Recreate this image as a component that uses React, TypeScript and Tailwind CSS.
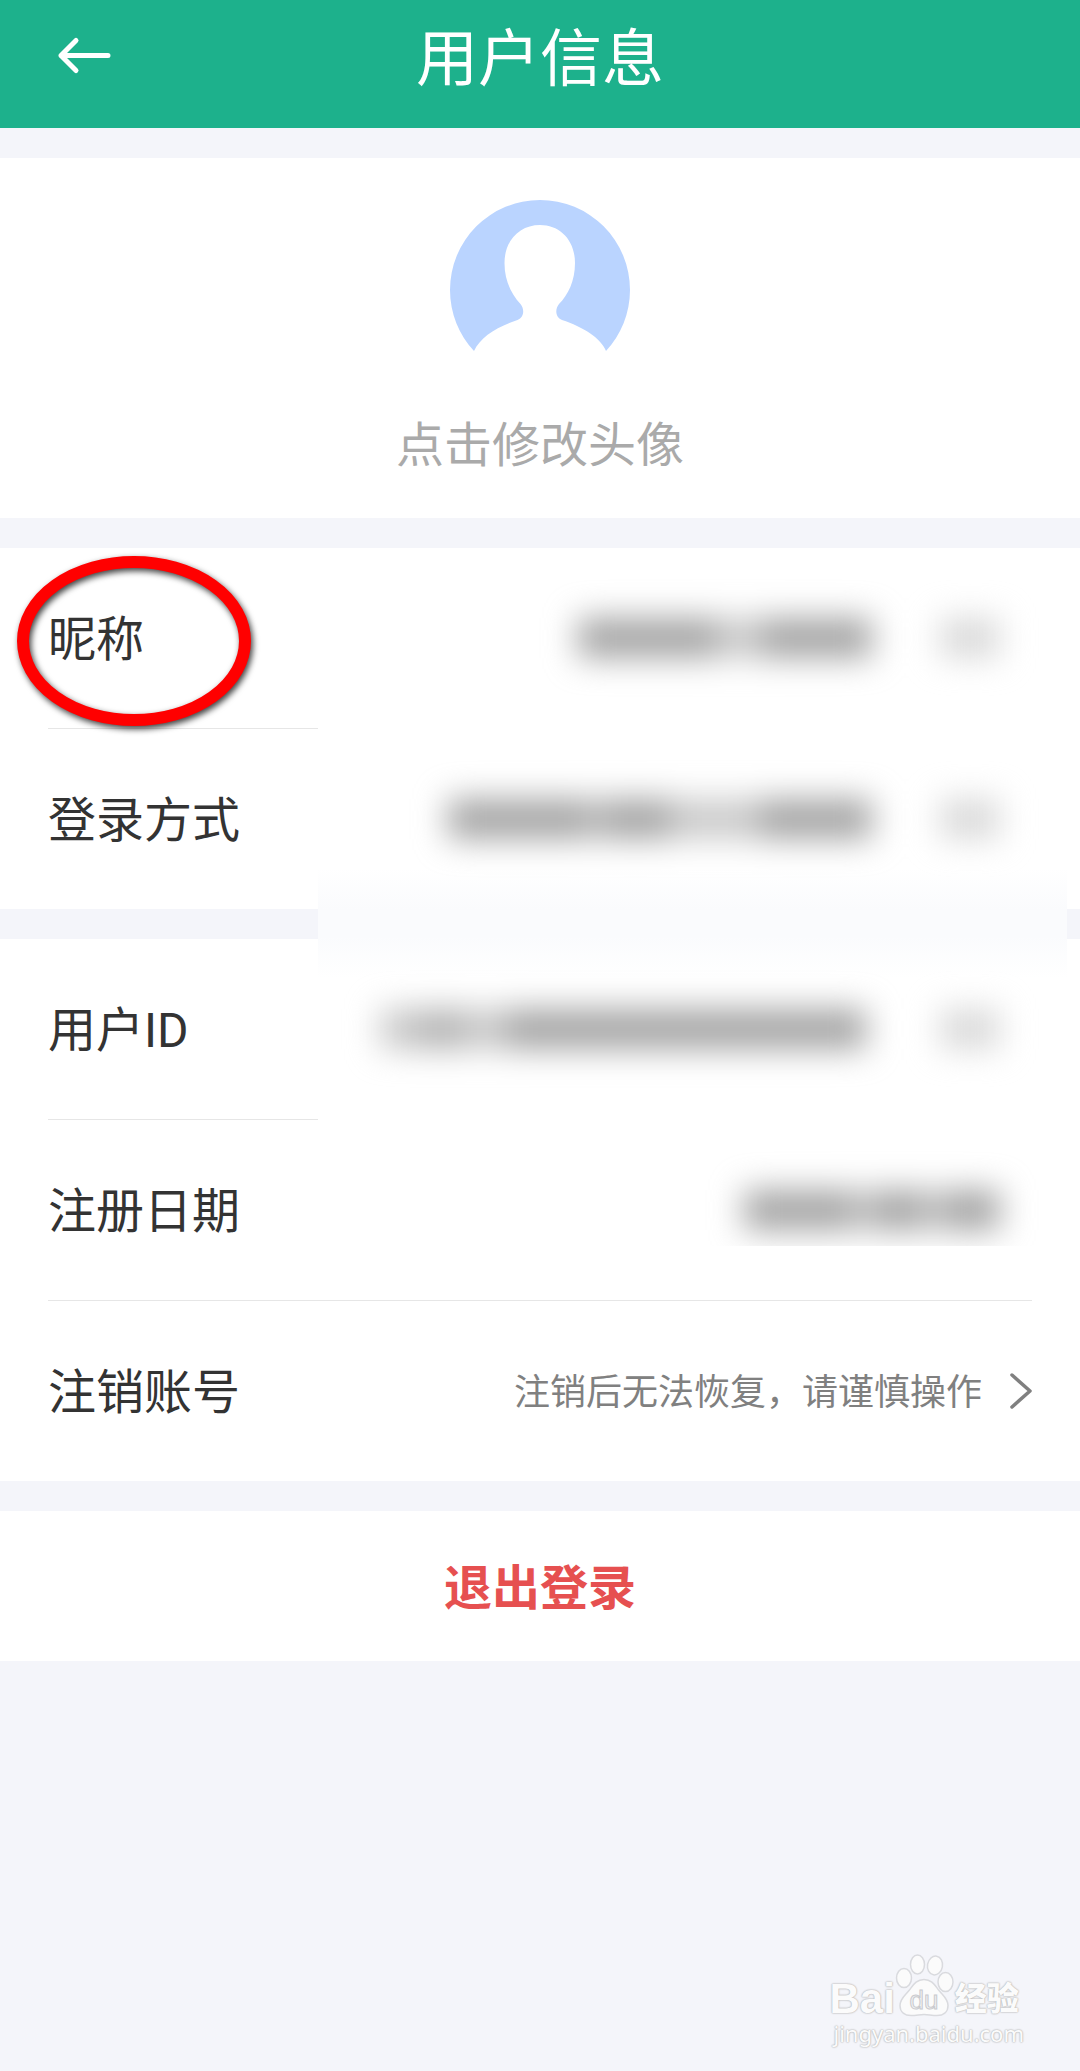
import type { ReactNode } from 'react'
import clsx from 'clsx'

interface Segment {
  width: number
  tone: 'dark' | 'mid' | 'light' | 'faint' | 'none'
}

const TONES: Record<Segment['tone'], string> = {
  dark: 'bg-[#a4a4a4]',
  mid: 'bg-[#b4b4b4]',
  light: 'bg-[#cacaca]',
  faint: 'bg-[#dadada]',
  none: 'bg-transparent',
}

// Space between the value and the arrow, then the arrow itself
const ARROW: Segment[] = [
  { width: 68, tone: 'none' },
  { width: 60, tone: 'faint' },
]

const NICKNAME: Segment[] = [
  { width: 138, tone: 'dark' },
  { width: 46, tone: 'light' },
  { width: 110, tone: 'dark' },
  ...ARROW,
]

const LOGIN_METHOD: Segment[] = [
  { width: 142, tone: 'dark' },
  { width: 12, tone: 'light' },
  { width: 68, tone: 'dark' },
  { width: 90, tone: 'light' },
  { width: 112, tone: 'dark' },
  ...ARROW,
]

const USER_ID: Segment[] = [
  { width: 36, tone: 'light' },
  { width: 50, tone: 'mid' },
  { width: 40, tone: 'light' },
  { width: 360, tone: 'dark' },
  { width: 6, tone: 'none' },
  ...ARROW,
]

const REGISTER_DATE: Segment[] = [
  { width: 110, tone: 'dark' },
  { width: 18, tone: 'light' },
  { width: 52, tone: 'dark' },
  { width: 18, tone: 'light' },
  { width: 58, tone: 'dark' },
]

function HiddenValue({ segments, clipped }: { segments: Segment[]; clipped?: boolean }) {
  return (
    <div
      className={clsx(
        'relative z-10 mr-8 flex blur-[16px]',
        clipped && '[clip-path:inset(-60px_-60px_-16px)]'
      )}
      aria-hidden="true"
    >
      {segments.map((segment, i) => (
        <span
          key={i}
          className={clsx('h-10', TONES[segment.tone])}
          style={{ width: segment.width }}
        />
      ))}
    </div>
  )
}

interface RowProps {
  label: string
  last?: boolean
  children: ReactNode
}

function Row({ label, last, children }: RowProps) {
  return (
    <div
      className={clsx(
        'mx-12 flex items-center justify-between',
        !last && 'border-b border-[#e6e6e6]'
      )}
    >
      <span className="pt-14 pb-[52px] text-[48px] leading-[72px] text-[#333333]">{label}</span>
      {children}
    </div>
  )
}

function Avatar() {
  return (
    <svg className="size-[180px]" viewBox="0 0 180 180" aria-hidden="true">
      <path
        fill="#bad4ff"
        d="M24 151C9 135 0 113 0 90a90 90 0 0 1 180 0c0 23-9 45-24 61-5-13-23-24-44-31-7-3-7-11-3-16 9-9 16-23 16-41 0-23-15-38-35-38S54.500 40 54.500 63c0 18 7 31 16 41 4 5 4 13-3 16-21 7-37 17-43.500 31z"
      />
    </svg>
  )
}

function Paw() {
  return (
    <svg className="h-16 w-[60px]" viewBox="0 0 60 64" aria-hidden="true">
      <g fill="#fbfbfb" stroke="#d9dade" strokeWidth="1.500">
        <ellipse cx="9" cy="25" rx="7.500" ry="9.500" />
        <ellipse cx="22.500" cy="11.500" rx="7" ry="9.500" />
        <ellipse cx="40" cy="12.500" rx="7.500" ry="9.500" transform="rotate(10 40 12.500)" />
        <ellipse cx="50.500" cy="29" rx="7.500" ry="9.500" />
        <path d="M29 26.500c8 0 11 6 15 11 4 5 9 8 9 15 0 7-5 10-11 10-5 0-9-1-13-1s-8 1-13 1c-6 0-11-3-11-10 0-7 5-10 9-15 4-5 7-11 15-11z" />
      </g>
      <text
        className="[text-shadow:none]"
        x="29"
        y="56"
        textAnchor="middle"
        fontSize="26"
        fontFamily="Liberation Sans, sans-serif"
        fill="#f1f1f3"
        stroke="#c9cace"
        strokeWidth="1"
      >
        du
      </text>
    </svg>
  )
}

export default function App() {
  return (
    <div className="flex min-h-screen flex-col bg-[#f4f5fa] font-[Roboto,'Noto_Sans_CJK_SC',sans-serif]">
      <header className="grid grid-cols-[1fr_auto_1fr] items-start bg-[#1db18c] px-14 pt-4 pb-6 text-white">
        <button type="button" aria-label="返回" className="mt-5 w-14">
          <svg className="h-10 w-14" viewBox="0 0 56 40" fill="none" stroke="currentColor">
            <path
              d="M20 4.500 5 19.500l15 15M5 19.500h47"
              strokeWidth="5"
              strokeLinecap="round"
              strokeLinejoin="round"
            />
          </svg>
        </button>
        <h1 className="text-[62px] leading-[88px]">用户信息</h1>
      </header>

      <main className="mt-[30px] flex flex-col gap-[30px]">
        <section className="bg-white">
          <button type="button" className="flex w-full flex-col items-center pt-[42px] pb-9">
            <Avatar />
            <span className="mt-[30px] text-[48px] leading-[72px] text-[#aaaaaa]">
              点击修改头像
            </span>
          </button>
        </section>

        <div className="relative flex flex-col gap-[30px]">
          <section className="bg-white">
            <Row label="昵称">
              <HiddenValue segments={NICKNAME} />
            </Row>
            <Row label="登录方式" last>
              <HiddenValue segments={LOGIN_METHOD} />
            </Row>
          </section>

          <section className="bg-white">
            <Row label="用户ID">
              <HiddenValue segments={USER_ID} />
            </Row>
            <Row label="注册日期">
              <HiddenValue segments={REGISTER_DATE} clipped />
            </Row>
            <Row label="注销账号" last>
              <a href="#cancel" className="flex items-center gap-7 text-[36px] text-[#808080]">
                <span className="pt-1">注销后无法恢复，请谨慎操作</span>
                <svg className="h-9 w-[22px]" viewBox="0 0 22 36" fill="none" stroke="currentColor">
                  <path d="M2 2 20 18 2 34" strokeWidth="3.500" strokeLinecap="round" strokeLinejoin="round" />
                </svg>
              </a>
            </Row>
          </section>

          {/* Privacy mask under the blurred values, hides the dividers */}
          <div className="absolute top-0 right-[13px] bottom-[235px] left-[318px] bg-[linear-gradient(to_bottom,#ffffff_320px,#fafbfd_362px,#fafbfd_388px,#ffffff_430px)]" />

          {/* Marker around the nickname label */}
          <svg
            className="pointer-events-none absolute top-0 left-2 h-[190px] w-[256px] drop-shadow-[2px_3px_3px_rgba(0,0,0,0.75)]"
            viewBox="0 0 256 190"
            fill="none"
            aria-hidden="true"
          >
            <ellipse cx="126" cy="93" rx="111" ry="79" stroke="#ff0000" strokeWidth="12" />
          </svg>
        </div>

        <button
          type="button"
          className="w-full bg-white pt-[42px] pb-9 text-[48px] leading-[72px] font-bold text-[#e65050]"
        >
          退出登录
        </button>
      </main>

      <footer className="mt-auto mr-14 mb-[22px] self-end text-[#fbfbfb] [text-shadow:0_0_1px_#bbbbbb,0_0_2px_#bbbbbb,0_0_2px_#cccccc]">
        <div className="-ml-1 flex items-end">
          <span className="font-['Liberation_Sans',sans-serif] text-[42px] leading-9 font-bold">
            Bai
          </span>
          <Paw />
          <span className="text-[32px] leading-9 font-black">经验</span>
        </div>
        <p className="font-['Noto_Sans',sans-serif] text-[22px] leading-8">jingyan.baidu.com</p>
      </footer>
    </div>
  )
}
